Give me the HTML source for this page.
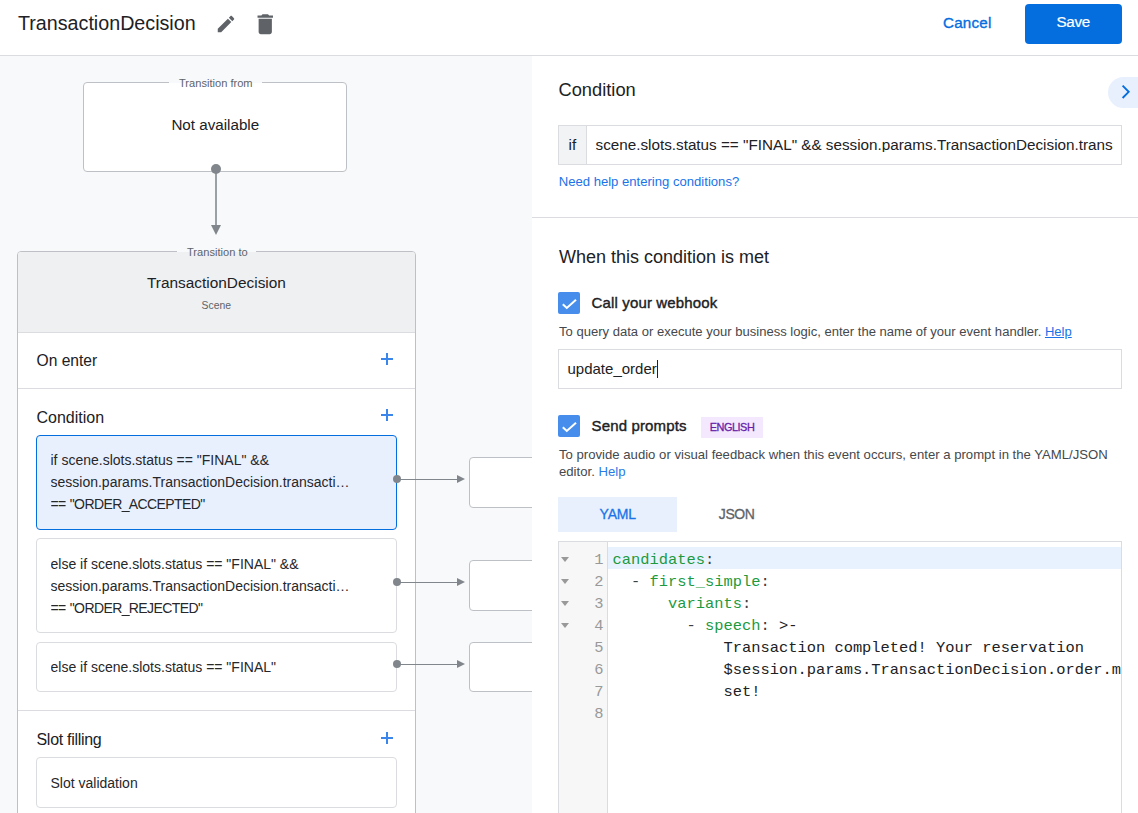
<!DOCTYPE html>
<html><head><meta charset="utf-8">
<style>
*{box-sizing:border-box;margin:0;padding:0}
html,body{width:1138px;height:813px;overflow:hidden;background:#fff;font-family:"Liberation Sans",sans-serif;color:#202124}
.a{position:absolute;white-space:pre;line-height:1}
.hdr{position:absolute;left:0;top:0;width:1138px;height:56px;border-bottom:1px solid #dadce0;background:#fff}
.left{position:absolute;left:0;top:56px;width:532px;height:757px;background:#f8f9fa;overflow:hidden}
.right{position:absolute;left:532px;top:56px;width:606px;height:757px;background:#fff;overflow:hidden}
.box{position:absolute;background:#fff;border:1px solid #bdc1c6;border-radius:4px}
.card{position:absolute;left:36px;width:361px;background:#fff;border:1px solid #dadce0;border-radius:4px}
.ln{position:absolute;white-space:pre;font-size:14px;line-height:22px;overflow:hidden;text-overflow:ellipsis;color:#26272a}
.plus{position:absolute;width:12px;height:12px}
.plus:before,.plus:after{content:"";position:absolute;background:#3b86ea}
.plus:before{left:5px;top:0;width:2px;height:12px}
.plus:after{left:0;top:5px;width:12px;height:2px}
.dot{position:absolute;width:8px;height:8px;border-radius:50%;background:#80868b}
.hl{position:absolute;height:1px;background:#80868b}
.arr{position:absolute;width:0;height:0;border-top:4px solid transparent;border-bottom:4px solid transparent;border-left:8px solid #80868b}
.chk{position:absolute;left:26px;width:22px;height:22px;background:#468dec;border-radius:2px}
.cl{position:absolute;left:53.5px;height:22px;line-height:22px;white-space:pre;color:#202124}
.cl .k{color:#1c9a40}.cl .p{color:#3c4043}
.gn{position:absolute;left:0;width:44.5px;text-align:right;height:22px;line-height:22px;color:#999}
.fa{position:absolute;left:2px;width:0;height:0;border-left:4.5px solid transparent;border-right:4.5px solid transparent;border-top:5px solid #999}
</style></head>
<body>
<div class="hdr">
  <div class="a" style="left:18px;top:13.5px;font-size:19.7px;color:#202124">TransactionDecision</div>
  <svg style="position:absolute;left:214.5px;top:12.8px" width="22" height="22" viewBox="0 0 24 24"><path fill="#5f6368" d="M3 17.25V21h3.75L17.81 9.94l-3.75-3.75L3 17.25zM20.71 7.04c.39-.39.39-1.02 0-1.41l-2.34-2.34c-.39-.39-1.02-.39-1.41 0l-1.83 1.83 3.75 3.75 1.83-1.83z"/></svg>
  <svg style="position:absolute;left:251.8px;top:11px" width="26.5" height="26.5" viewBox="0 0 24 24"><path fill="#5f6368" d="M6 19c0 1.1.9 2 2 2h8c1.1 0 2-.9 2-2V7H6v12zM19 4h-3.5l-1-1h-5l-1 1H5v2h14V4z"/></svg>
  <div class="a" style="left:943px;top:15.2px;font-size:15.2px;letter-spacing:0.2px;-webkit-text-stroke:0.35px #046edf;color:#046edf">Cancel</div>
  <div style="position:absolute;left:1025px;top:4px;width:97px;height:40px;background:#046edf;border-radius:4px"></div>
  <div class="a" style="left:1056.5px;top:14.4px;font-size:15.2px;letter-spacing:-0.3px;-webkit-text-stroke:0.2px #fff;color:#fff">Save</div>
</div>

<div class="left">
  <!-- coordinates inside left are offset by top:56 -->
  <div id="lp" style="position:absolute;left:0;top:-56px;width:532px;height:813px">
    <!-- transition from -->
    <div class="box" style="left:83px;top:82px;width:264px;height:90px"></div>
    <div style="position:absolute;left:169px;top:82px;width:93px;height:1px;background:#f8f9fa"></div>
    <div class="a" style="left:179px;top:77.5px;font-size:11.1px;color:#5f6368">Transition from</div>
    <div class="a" style="left:171.4px;top:116.8px;font-size:15.2px;color:#202124">Not available</div>
    <div style="position:absolute;left:215px;top:170px;width:2px;height:56px;background:#9aa0a6"></div>
    <div class="dot" style="left:211px;top:164px;width:10px;height:10px"></div>
    <div style="position:absolute;left:211px;top:225px;width:0;height:0;border-left:5px solid transparent;border-right:5px solid transparent;border-top:10px solid #80868b"></div>

    <!-- scene box -->
    <div style="position:absolute;left:17px;top:251px;width:399px;height:700px;background:#fff;border:1px solid #bdc1c6;border-radius:4px;overflow:hidden">
      <div style="position:absolute;left:0;top:0;width:100%;height:81px;background:#eef0f2;border-bottom:1px solid #dadce0"></div>
      <div style="position:absolute;left:0;top:136px;width:100%;height:1px;background:#dadce0"></div>
      <div style="position:absolute;left:0;top:458px;width:100%;height:1px;background:#dadce0"></div>
    </div>
    <div style="position:absolute;left:177px;top:251px;width:79px;height:1px;background:#f8f9fa"></div>
    <div class="a" style="left:187px;top:246.6px;font-size:11.1px;color:#5f6368">Transition to</div>
    <div class="a" style="left:147px;top:275.4px;font-size:15.4px;color:#202124">TransactionDecision</div>
    <div class="a" style="left:201.5px;top:301.2px;font-size:10.4px;color:#5f6368">Scene</div>

    <div class="a" style="left:36.5px;top:352.8px;font-size:15.6px;color:#202124">On enter</div>
    <div class="plus" style="left:381px;top:353px"></div>
    <div class="a" style="left:36.5px;top:409.7px;font-size:16px;color:#202124">Condition</div>
    <div class="plus" style="left:381px;top:409px"></div>

    <div class="card" style="top:435px;height:95px;background:#e8f0fe;border-color:#046edf"></div>
    <div class="ln" style="left:50.5px;top:449px;width:304px">if scene.slots.status == "FINAL" &amp;&amp;</div>
    <div class="ln" style="left:50.5px;top:471px;width:304px">session.params.TransactionDecision.transaction.decision</div>
    <div class="ln" style="left:50.5px;top:493px;width:304px;letter-spacing:-0.6px;word-spacing:0.8px">== "ORDER_ACCEPTED"</div>

    <div class="card" style="top:538px;height:95px"></div>
    <div class="ln" style="left:50.5px;top:552.5px;width:304px">else if scene.slots.status == "FINAL" &amp;&amp;</div>
    <div class="ln" style="left:50.5px;top:574.5px;width:304px">session.params.TransactionDecision.transaction.decision</div>
    <div class="ln" style="left:50.5px;top:596.5px;width:304px;letter-spacing:-0.6px;word-spacing:0.8px">== "ORDER_REJECTED"</div>

    <div class="card" style="top:642px;height:50px"></div>
    <div class="ln" style="left:50.5px;top:656px;width:304px">else if scene.slots.status == "FINAL"</div>

    <div class="a" style="left:36.5px;top:732.3px;font-size:16px;letter-spacing:-0.3px;color:#202124">Slot filling</div>
    <div class="plus" style="left:381px;top:732px"></div>
    <div class="card" style="top:757px;height:51px"></div>
    <div class="ln" style="left:50.5px;top:772px;width:304px">Slot validation</div>

    <!-- arrows -->
    <div class="hl" style="left:397px;top:479px;width:62px"></div>
    <div class="dot" style="left:392.5px;top:475px"></div>
    <div class="arr" style="left:457px;top:475px"></div>
    <div class="box" style="left:469px;top:457px;width:80px;height:51px"></div>

    <div class="hl" style="left:397px;top:582px;width:62px"></div>
    <div class="dot" style="left:392.5px;top:578px"></div>
    <div class="arr" style="left:457px;top:578px"></div>
    <div class="box" style="left:469px;top:560px;width:80px;height:51px"></div>

    <div class="hl" style="left:397px;top:664px;width:62px"></div>
    <div class="dot" style="left:392.5px;top:660px"></div>
    <div class="arr" style="left:457px;top:660px"></div>
    <div class="box" style="left:469px;top:642px;width:80px;height:50px"></div>
  </div>
</div>

<div class="right">
  <div id="rp" style="position:absolute;left:-532px;top:-56px;width:1138px;height:813px">
    <div class="a" style="left:558.5px;top:80.6px;font-size:18.3px;color:#202124">Condition</div>
    <div style="position:absolute;left:1108px;top:77px;width:60px;height:31px;border-radius:15.5px;background:#e8f0fe"></div>
    <svg style="position:absolute;left:1108px;top:77px" width="30" height="31" viewBox="1108 77 30 31"><path fill="none" stroke="#046edf" stroke-width="1.9" d="M1122.6 85.6L1128.7 91.8L1122.6 98"/></svg>

    <div style="position:absolute;left:558px;top:125px;width:564px;height:40px;border:1px solid #dadce0;overflow:hidden">
      <div style="position:absolute;left:0;top:0;width:28px;height:38px;background:#f1f3f4;border-right:1px solid #dadce0"></div>
    </div>
    <div class="a" style="left:568.6px;top:136.7px;font-size:15.25px;color:#202124">if</div>
    <div class="a" style="left:595.5px;top:136.7px;font-size:15.25px;color:#202124;width:517px;overflow:hidden">scene.slots.status == "FINAL" &amp;&amp; session.params.TransactionDecision.transaction.decision == "ORDER_ACCEPTED"</div>
    <div class="a" style="left:558.7px;top:174.7px;font-size:13.1px;color:#1a73e8">Need help entering conditions?</div>
    <div style="position:absolute;left:532px;top:217px;width:606px;height:1px;background:#dadce0"></div>

    <div class="a" style="left:559px;top:248px;font-size:18px;color:#202124">When this condition is met</div>
    <div class="chk" style="left:558px;top:292px"></div>
    <svg style="position:absolute;left:558px;top:292px" width="22" height="22" viewBox="0 0 22 22"><path fill="none" stroke="#fff" stroke-width="2" d="M4.8 12.2L8.8 16L18 7.8"/></svg>
    <div class="a" style="left:591.5px;top:295.3px;font-size:15px;letter-spacing:0.15px;-webkit-text-stroke:0.4px #202124;color:#202124">Call your webhook</div>
    <div class="a" style="left:559px;top:325px;font-size:13.05px;color:#45484c">To query data or execute your business logic, enter the name of your event handler. <span style="color:#1a73e8;text-decoration:underline">Help</span></div>
    <div style="position:absolute;left:558px;top:349px;width:564px;height:40px;border:1px solid #dadce0"></div>
    <div class="a" style="left:567.5px;top:361.3px;font-size:15px;color:#202124">update_order</div>
    <div style="position:absolute;left:657px;top:360px;width:1px;height:18px;background:#202124"></div>

    <div class="chk" style="left:558px;top:415px"></div>
    <svg style="position:absolute;left:558px;top:415px" width="22" height="22" viewBox="0 0 22 22"><path fill="none" stroke="#fff" stroke-width="2" d="M4.8 12.2L8.8 16L18 7.8"/></svg>
    <div class="a" style="left:591.5px;top:418px;font-size:15px;letter-spacing:0.15px;-webkit-text-stroke:0.4px #202124;color:#202124">Send prompts</div>
    <div style="position:absolute;left:701px;top:417px;width:62px;height:21px;background:#f3e8fd"></div>
    <div class="a" style="left:709.7px;top:421.6px;font-size:10.9px;letter-spacing:-0.45px;-webkit-text-stroke:0.3px #681da8;color:#681da8">ENGLISH</div>
    <div class="a" style="left:559px;top:448.3px;font-size:13.15px;color:#45484c">To provide audio or visual feedback when this event occurs, enter a prompt in the YAML/JSON</div>
    <div class="a" style="left:559px;top:465.1px;font-size:13.15px;color:#45484c">editor. <span style="color:#2a7be6">Help</span></div>

    <div style="position:absolute;left:558px;top:497px;width:119px;height:35px;background:#e8f0fe"></div>
    <div class="a" style="left:599.6px;top:506.8px;font-size:14px;letter-spacing:-0.25px;-webkit-text-stroke:0.3px #1a73e8;color:#1a73e8">YAML</div>
    <div class="a" style="left:718.8px;top:506.8px;font-size:14px;letter-spacing:-0.4px;-webkit-text-stroke:0.3px #5f6368;color:#5f6368">JSON</div>

    <div id="ed" style="position:absolute;left:558px;top:541px;width:564px;height:300px;border:1px solid #dadce0;overflow:hidden;font-family:'Liberation Mono',monospace;font-size:15.42px">
      <div style="position:absolute;left:0;top:0;width:49px;height:100%;background:#f7f7f7;border-right:1px solid #dadce0"></div>
      <div style="position:absolute;left:49px;top:5px;width:600px;height:22px;background:#e8f2fe"></div>
      <div class="cl" style="top:7px"><span class="k">candidates</span><span class="p">:</span></div>
      <div class="gn" style="top:7px">1</div>
      <div class="fa" style="top:15px"></div>
      <div class="cl" style="top:29px">  <span class="p">-</span> <span class="k">first_simple</span><span class="p">:</span></div>
      <div class="gn" style="top:29px">2</div>
      <div class="fa" style="top:37px"></div>
      <div class="cl" style="top:51px">      <span class="k">variants</span><span class="p">:</span></div>
      <div class="gn" style="top:51px">3</div>
      <div class="fa" style="top:59px"></div>
      <div class="cl" style="top:73px">        <span class="p">-</span> <span class="k">speech</span><span class="p">:</span> &gt;-</div>
      <div class="gn" style="top:73px">4</div>
      <div class="fa" style="top:81px"></div>
      <div class="cl" style="top:95px">            Transaction completed! Your reservation</div>
      <div class="gn" style="top:95px">5</div>
      <div class="cl" style="top:117px">            $session.params.TransactionDecision.order.merchantOrderId is all</div>
      <div class="gn" style="top:117px">6</div>
      <div class="cl" style="top:139px">            set!</div>
      <div class="gn" style="top:139px">7</div>
      <div class="cl" style="top:161px"></div>
      <div class="gn" style="top:161px">8</div>
    </div>
  </div>
</div>
</body></html>
